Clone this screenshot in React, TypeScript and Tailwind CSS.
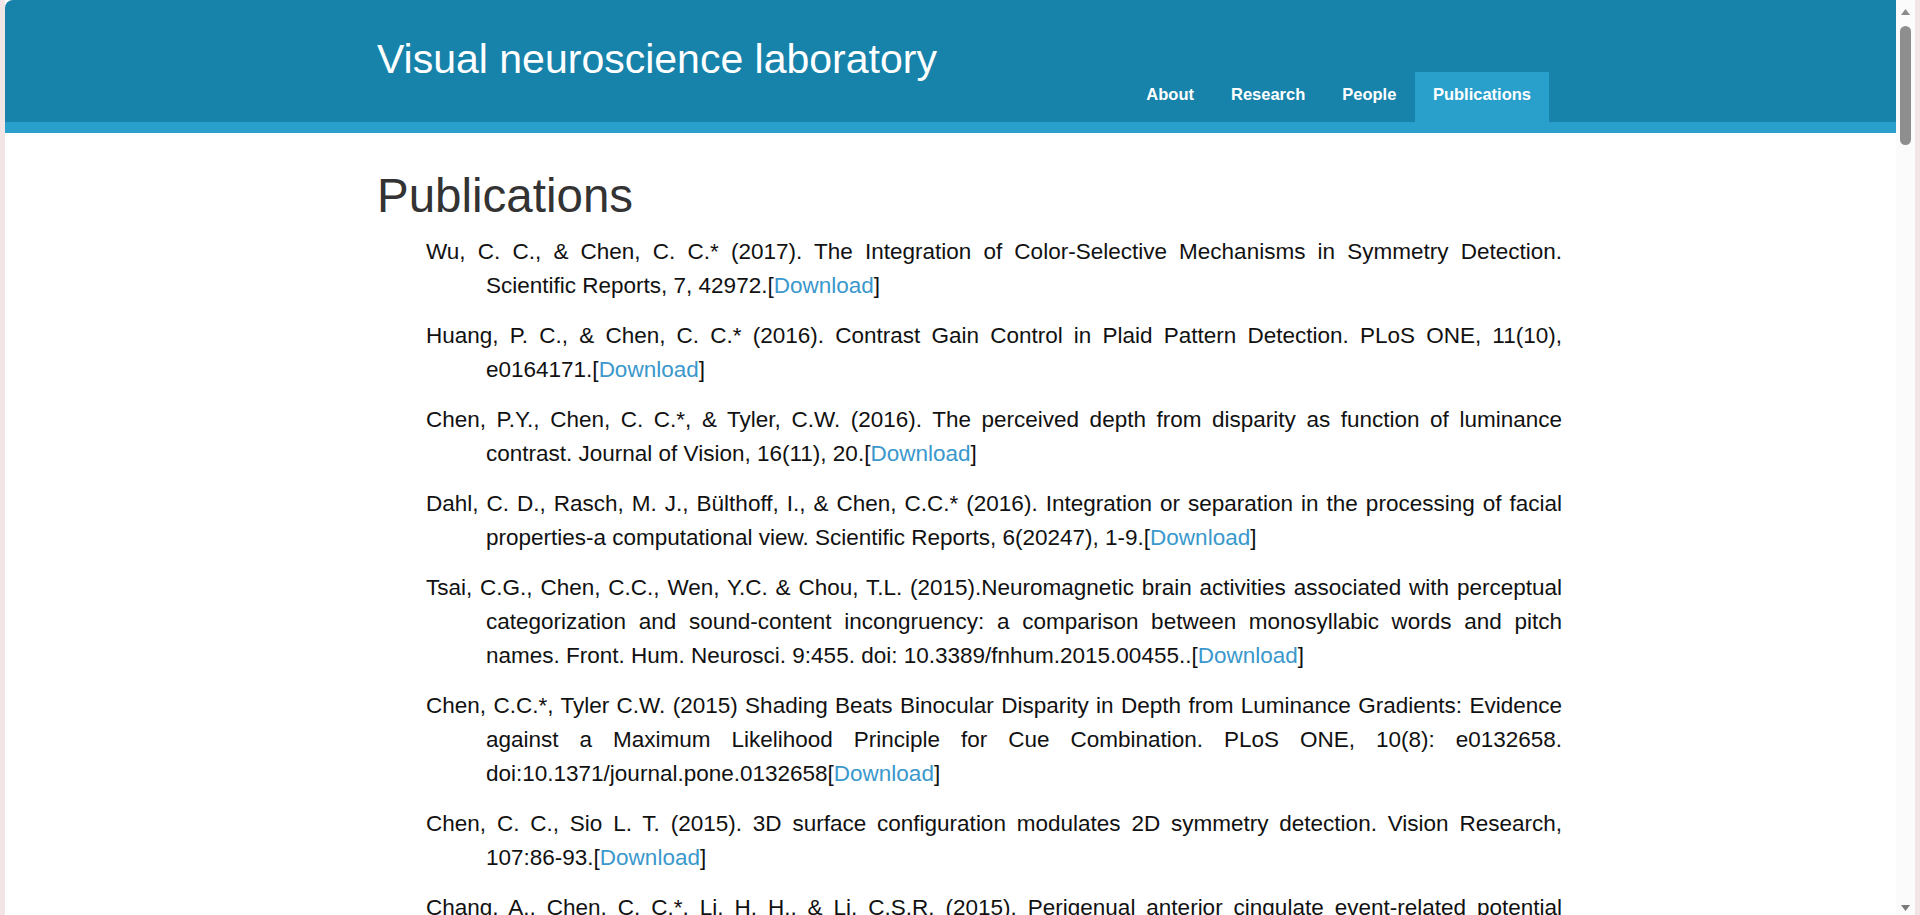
import React from "react";

type Pub = { text: string };

const pubs: Pub[] = [
  { text: "Wu, C. C., & Chen, C. C.* (2017). The Integration of Color-Selective Mechanisms in Symmetry Detection. Scientific Reports, 7, 42972." },
  { text: "Huang, P. C., & Chen, C. C.* (2016). Contrast Gain Control in Plaid Pattern Detection. PLoS ONE, 11(10), e0164171." },
  { text: "Chen, P.Y., Chen, C. C.*, & Tyler, C.W. (2016). The perceived depth from disparity as function of luminance contrast. Journal of Vision, 16(11), 20." },
  { text: "Dahl, C. D., Rasch, M. J., Bülthoff, I., & Chen, C.C.* (2016). Integration or separation in the processing of facial properties-a computational view. Scientific Reports, 6(20247), 1-9." },
  { text: "Tsai, C.G., Chen, C.C., Wen, Y.C. & Chou, T.L. (2015).Neuromagnetic brain activities associated with perceptual categorization and sound-content incongruency: a comparison between monosyllabic words and pitch names. Front. Hum. Neurosci. 9:455. doi: 10.3389/fnhum.2015.00455.." },
  { text: "Chen, C.C.*, Tyler C.W. (2015) Shading Beats Binocular Disparity in Depth from Luminance Gradients: Evidence against a Maximum Likelihood Principle for Cue Combination. PLoS ONE, 10(8): e0132658. doi:10.1371/journal.pone.0132658" },
  { text: "Chen, C. C., Sio L. T. (2015). 3D surface configuration modulates 2D symmetry detection. Vision Research, 107:86-93." },
  { text: "Chang, A., Chen, C. C.*, Li, H. H., & Li, C.S.R. (2015). Perigenual anterior cingulate event-related potential precedes stop signal errors. NeuroImage, 111, 171-180." },
  { text: "Chen, C. C., & Tyler, C. W. (2015). Symmetry: Modeling the effects of masking noise, axial cueing and salience. PLoS ONE." },
];

const navItems = ["About", "Research", "People", "Publications"];

export default function App() {
  return (
    <div
      className="flex h-[915px] w-[1920px] overflow-hidden bg-[#f1e5e5]"
      style={{ fontFamily: '"Liberation Sans", Arial, sans-serif' }}
    >
      <div className="w-[5px] shrink-0 bg-[#f1e5e5]" />
      <div className="flex h-full w-[1891px] shrink-0 flex-col overflow-hidden bg-white">
        <header className="flex shrink-0 flex-col rounded-tl-[8px] bg-[#1783ab]">
          <div className="flex h-[122px] pl-[372px]">
            <div className="flex w-[1172px] justify-between">
              <div className="pt-[39px] text-[41px] leading-none text-white">
                Visual neuroscience laboratory
              </div>
              <nav className="flex items-end">
                {navItems.map((n) => (
                  <a
                    key={n}
                    className={
                      n === "Publications"
                        ? "flex h-[50px] items-start bg-[#29a0cc] px-[18px] pt-[12px] text-[16.5px] font-bold leading-[20px] text-white"
                        : "flex h-[50px] items-start px-[18.5px] pt-[12px] text-[16.5px] font-bold leading-[20px] text-white"
                    }
                  >
                    {n}
                  </a>
                ))}
              </nav>
            </div>
          </div>
          <div className="h-[11px] bg-[#29a0cc]" />
        </header>
        <main className="pl-[372px]">
          <h1 className="mt-[39px] text-[47.5px] leading-none text-[#333333]">Publications</h1>
          <div className="mt-[15px] ml-[49px] w-[1136px]">
            {pubs.map((p, i) => (
              <p
                key={i}
                className="mb-[16px] pl-[60px] -indent-[60px] text-justify text-[22.5px] leading-[34px] text-[#111111]"
              >
                {p.text}[<a className="text-[#3a98cc]">Download</a>]
              </p>
            ))}
          </div>
        </main>
      </div>
      <div className="flex h-full w-[19px] shrink-0 flex-col items-center bg-[#fbfbfb]">
        <svg width="11" height="8" viewBox="0 0 11 8" className="mt-[8px]">
          <path d="M5.5 1 L10 7 L1 7 Z" fill="#8a8a8a" />
        </svg>
        <div className="mt-[10px] h-[119px] w-[11px] rounded-full bg-[#8e8e8e]" />
        <div className="flex-1" />
        <svg width="11" height="8" viewBox="0 0 11 8" className="mb-[3px]">
          <path d="M1 1 L10 1 L5.5 7 Z" fill="#7a7a7a" />
        </svg>
      </div>
      <div className="w-[5px] shrink-0 bg-[#f1e5e5]" />
    </div>
  );
}
